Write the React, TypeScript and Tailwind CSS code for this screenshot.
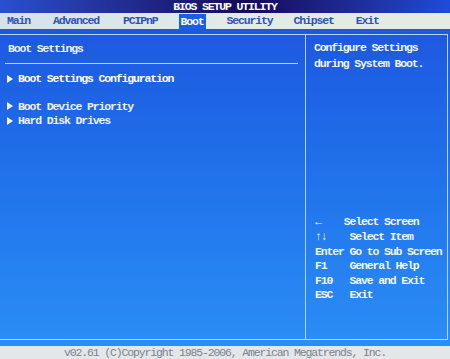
import React from "react";

const mono = {
  fontFamily: '"Liberation Mono", "DejaVu Sans Mono", monospace',
};

function Tri() {
  return (
    <svg width="6" height="8" viewBox="0 0 6 8" className="shrink-0">
      <path d="M0 0 L6 4 L0 8 Z" fill="#f4f8ff" />
    </svg>
  );
}

export default function App() {
  const help: [string, string][] = [
    ["←", "    Select Screen"],
    ["↑↓", "    Select Item"],
    ["Enter", " Go to Sub Screen"],
    ["F1", "    General Help"],
    ["F10", "   Save and Exit"],
    ["ESC", "   Exit"],
  ];
  return (
    <div
      className="w-[450px] h-[359px] flex flex-col overflow-hidden text-[11.5px] tracking-[-1.15px] font-bold"
      style={mono}
    >
      {/* title bar */}
      <div className="h-[13px] flex items-center justify-center bg-linear-to-r from-[#2a50d2] via-[#160a58] via-55% to-[#1e4cd8]">
        <span className="text-white leading-none">BIOS SETUP UTILITY</span>
      </div>
      {/* menu bar */}
      <div className="h-[16px] flex items-stretch bg-linear-to-r from-[#d6e2ea] via-[#e2ebe8] to-[#e4ebe2] text-[#2d52b8] whitespace-pre">
        <span className="ml-[7px] flex items-center">Main</span>
        <span className="ml-[23px] flex items-center">Advanced</span>
        <span className="ml-[24px] flex items-center">PCIPnP</span>
        <span className="ml-[21px] mt-[1px] px-[2px] flex items-center bg-[#1b5ee6] text-white">Boot</span>
        <span className="ml-[21px] flex items-center">Security</span>
        <span className="ml-[21px] flex items-center">Chipset</span>
        <span className="ml-[22px] flex items-center">Exit</span>
      </div>
      {/* main area */}
      <div className="flex-1 flex flex-col bg-linear-to-b from-[#1d58e0] to-[#2b8ef6] pt-[5px] pr-[2px] pb-[6px]">
        <div className="flex-1 flex border-t border-b border-r border-[#b4d8ff]">
          {/* left panel */}
          <div className="w-[306px] border-r border-[#b4d8ff] pt-[6px] text-[#eef3ff]">
            <div className="h-[15px] leading-[15px] pl-[8px]">Boot Settings</div>
            <div className="mt-[7px] ml-[5px] w-[293px] h-px bg-[#b4d8ff]" />
            <div className="mt-[7px] h-[15px] flex items-center pl-[7px] gap-[5px] text-white">
              <Tri />
              <span>Boot Settings Configuration</span>
            </div>
            <div className="mt-[13px] h-[14.5px] flex items-center pl-[7px] gap-[5px]">
              <Tri />
              <span>Boot Device Priority</span>
            </div>
            <div className="h-[14.5px] flex items-center pl-[7px] gap-[5px]">
              <Tri />
              <span>Hard Disk Drives</span>
            </div>
          </div>
          {/* right panel */}
          <div className="flex-1 flex flex-col pt-[5px] pb-[36px] pl-[8px] text-[#f2f6ff]">
            <div className="leading-[16px]">
              <div>Configure Settings</div>
              <div>during System Boot.</div>
            </div>
            <div className="mt-auto pl-[1px] whitespace-pre">
              {help.map(([k, d], i) => (
                <div key={i} className="h-[14.6px] leading-[14.6px]">
                  <span>{k}</span>
                  <span>{d}</span>
                </div>
              ))}
            </div>
          </div>
        </div>
      </div>
      {/* footer */}
      <div className="h-[13px] bg-[#e3e7e8] flex items-center justify-center text-[#7c838c] font-normal">
        <span>v02.61 (C)Copyright 1985-2006, American Megatrends, Inc.</span>
      </div>
    </div>
  );
}
